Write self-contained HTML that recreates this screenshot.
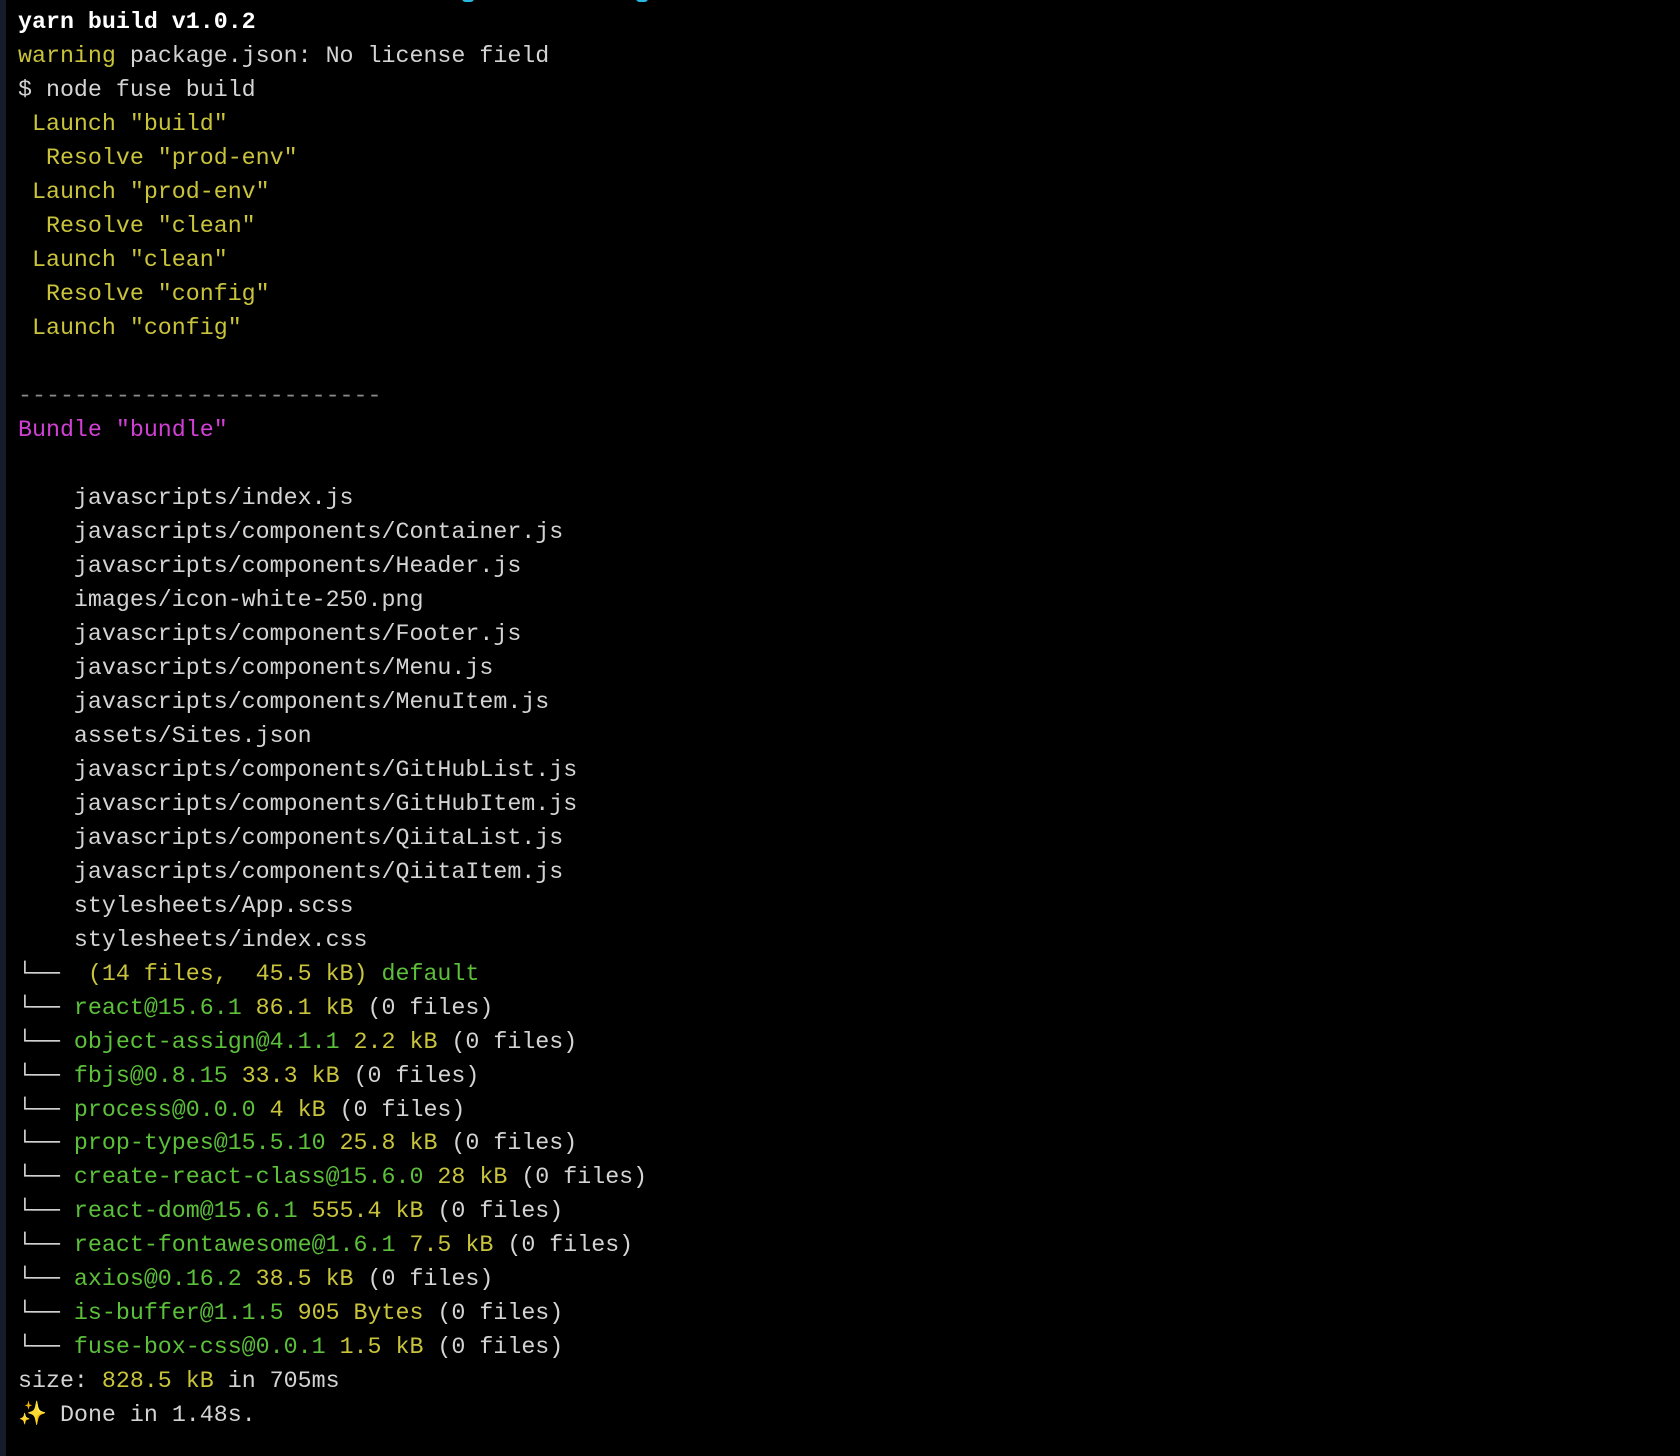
<!DOCTYPE html>
<html><head><meta charset="utf-8"><style>
html,body{margin:0;padding:0;background:#000;width:1680px;height:1456px;overflow:hidden}
body{position:relative}
.bar{position:absolute;left:0;top:0;width:6px;height:1456px;background:#161b2a}
pre{margin:0;position:absolute;left:18px;top:6px;font-family:"Liberation Mono","DejaVu Sans Mono",monospace;font-size:23.3px;line-height:33.99px;color:#d4d4d4;white-space:pre}
.b{font-weight:bold;color:#fff}
.y{color:#c9c43c}
.g{color:#5cc03a}
.m{color:#d140d4}
.d{color:#8a8a8a}
.s{display:inline-block;width:28px;color:#f5d33a}
.c{position:absolute;top:-5px;width:12px;height:7px;border-radius:4px;background:#2ab7e0}
</style></head><body>
<div class="bar"></div>
<div class="c" style="left:462px"></div><div class="c" style="left:636px"></div>
<pre><span class="b">yarn build v1.0.2</span>
<span class="y">warning</span> package.json: No license field
$ node fuse build
<span class="y"> Launch "build"</span>
<span class="y">  Resolve "prod-env"</span>
<span class="y"> Launch "prod-env"</span>
<span class="y">  Resolve "clean"</span>
<span class="y"> Launch "clean"</span>
<span class="y">  Resolve "config"</span>
<span class="y"> Launch "config"</span>

<span class="d">--------------------------</span>
<span class="m">Bundle "bundle"</span>

    javascripts/index.js
    javascripts/components/Container.js
    javascripts/components/Header.js
    images/icon-white-250.png
    javascripts/components/Footer.js
    javascripts/components/Menu.js
    javascripts/components/MenuItem.js
    assets/Sites.json
    javascripts/components/GitHubList.js
    javascripts/components/GitHubItem.js
    javascripts/components/QiitaList.js
    javascripts/components/QiitaItem.js
    stylesheets/App.scss
    stylesheets/index.css
└──  <span class="y">(14 files,  45.5 kB)</span> <span class="g">default</span>
└── <span class="g">react@15.6.1</span> <span class="y">86.1 kB</span> (0 files)
└── <span class="g">object-assign@4.1.1</span> <span class="y">2.2 kB</span> (0 files)
└── <span class="g">fbjs@0.8.15</span> <span class="y">33.3 kB</span> (0 files)
└── <span class="g">process@0.0.0</span> <span class="y">4 kB</span> (0 files)
└── <span class="g">prop-types@15.5.10</span> <span class="y">25.8 kB</span> (0 files)
└── <span class="g">create-react-class@15.6.0</span> <span class="y">28 kB</span> (0 files)
└── <span class="g">react-dom@15.6.1</span> <span class="y">555.4 kB</span> (0 files)
└── <span class="g">react-fontawesome@1.6.1</span> <span class="y">7.5 kB</span> (0 files)
└── <span class="g">axios@0.16.2</span> <span class="y">38.5 kB</span> (0 files)
└── <span class="g">is-buffer@1.1.5</span> <span class="y">905 Bytes</span> (0 files)
└── <span class="g">fuse-box-css@0.0.1</span> <span class="y">1.5 kB</span> (0 files)
size: <span class="y">828.5 kB</span> in 705ms
<span class="s">✨</span> Done in 1.48s.</pre>
</body></html>
